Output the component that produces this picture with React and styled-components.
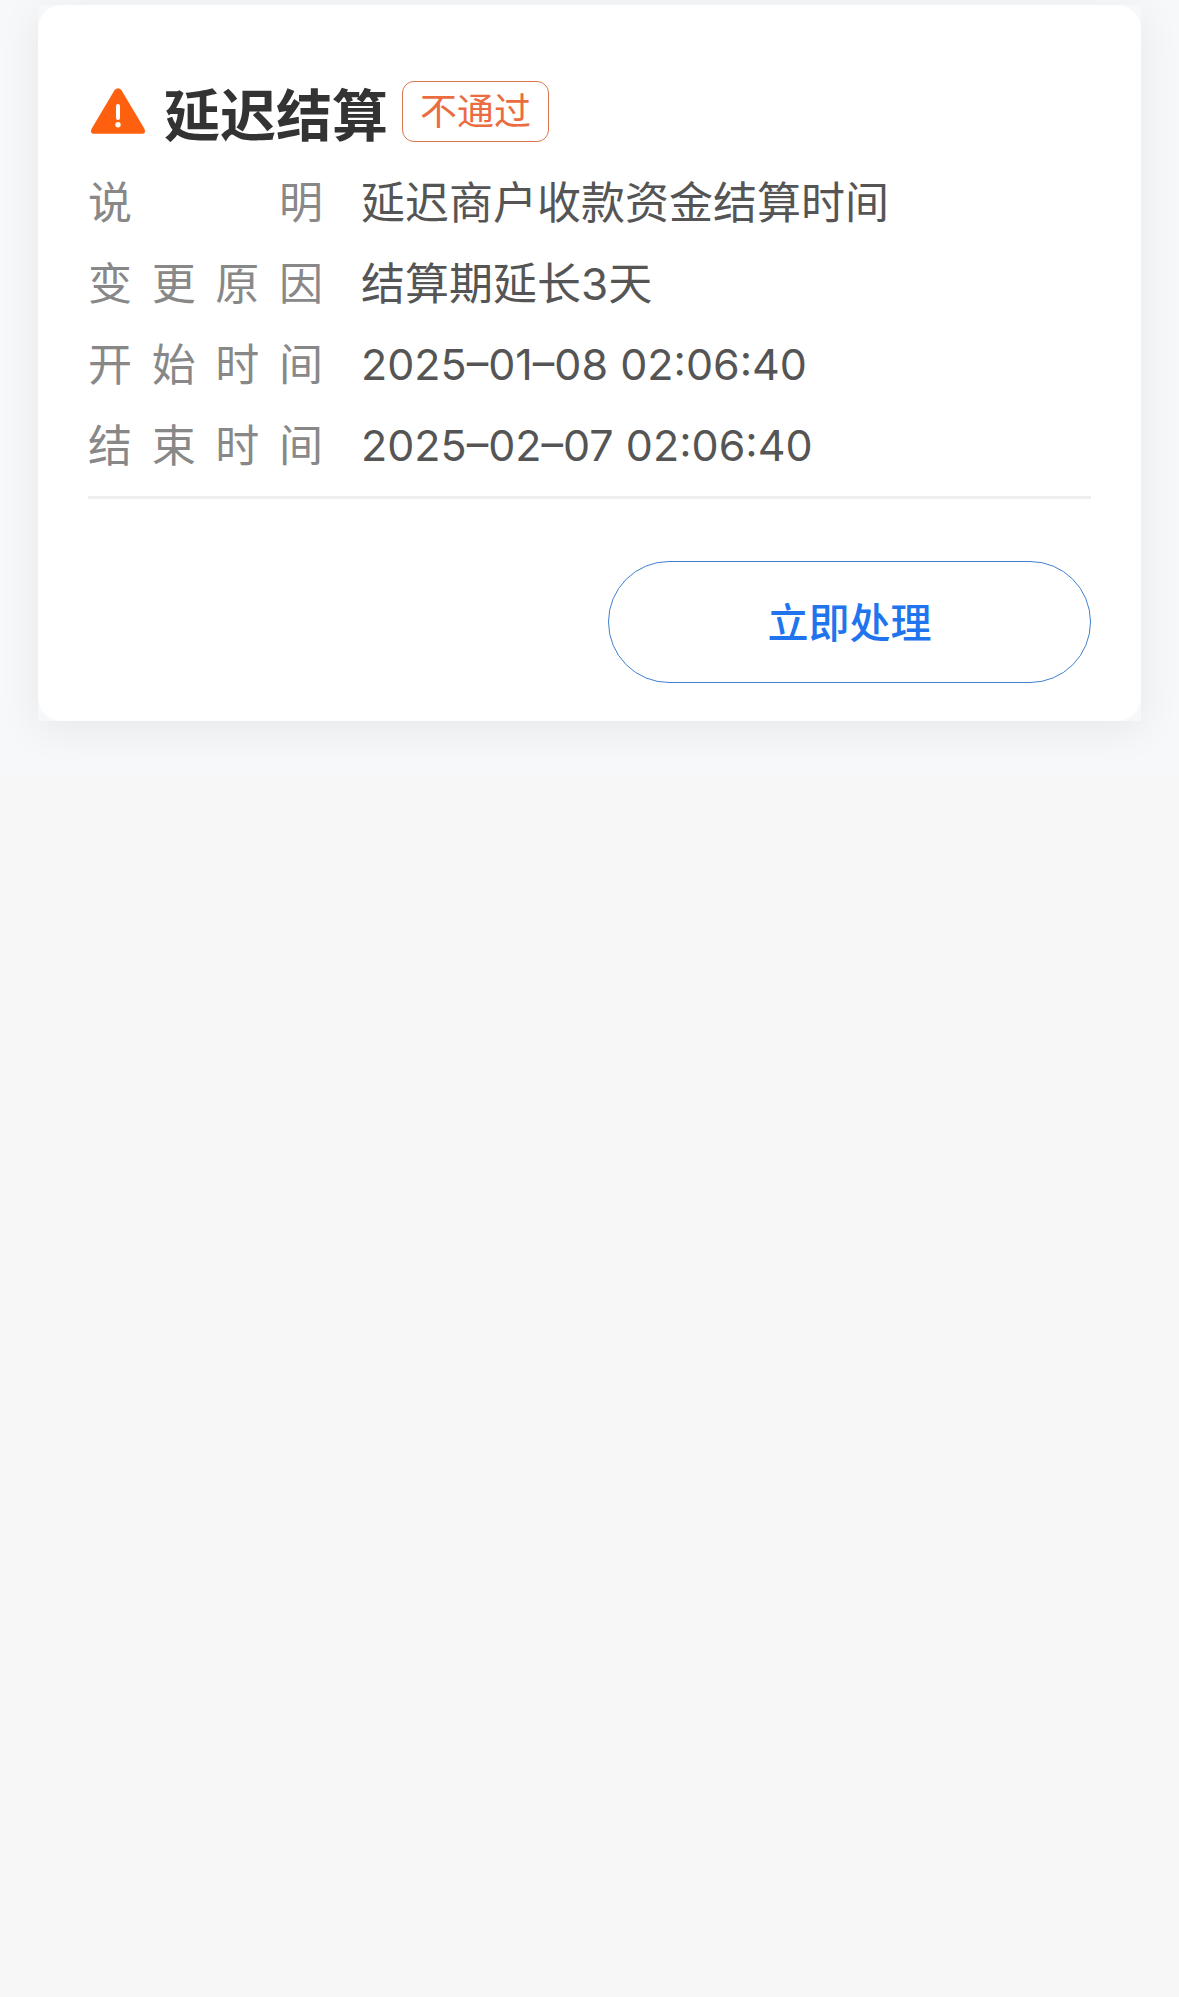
import styled, { createGlobalStyle } from "styled-components";

const GlobalStyle = createGlobalStyle`
  * {
    box-sizing: border-box;
  }
  body {
    margin: 0;
    background-color: #f7f7f7;
    font-family: Inter, "Noto Sans CJK SC", sans-serif;
  }
`;

const Section = styled.main`
  padding: 5px 38px 56px;
  background-color: #f6f8fa;
  overflow: hidden;
`;

const Shadow = styled.div`
  background-color: #f6f8fa;
  box-shadow: 0 8px 40px rgba(0, 0, 0, 0.07);
`;

const Card = styled.article`
  padding: 76px 50px 38px;
  border-radius: 24px;
  background-color: #fff;
`;

const Header = styled.header`
  display: flex;
  align-items: center;
  height: 61px;
  margin-bottom: 31px;
`;

const WarningIcon = styled.svg`
  width: 60px;
  height: 60px;
  flex-shrink: 0;
  margin-right: 16px;
`;

const Title = styled.h1`
  margin: 0 14px 0 0;
  padding-top: 8px;
  color: #333;
  font-size: 56px;
  font-weight: 700;
  line-height: 62px;
`;

const Tag = styled.span`
  padding: 0 17px;
  border: 1px solid #d9774f;
  border-radius: 12px;
  color: #ea6c40;
  font-size: 37px;
  line-height: 59px;
`;

const InfoList = styled.dl`
  display: flex;
  flex-direction: column;
  gap: 20px;
  margin: 0;
  padding-bottom: 19px;
  border-bottom: 3px solid #eee;
`;

const InfoRow = styled.div`
  display: flex;
  gap: 38px;
  font-size: 44px;
  line-height: 61px;
`;

const Label = styled.dt`
  width: 235px;
  flex-shrink: 0;
  color: #888;
  text-align: justify;
  text-align-last: justify;
`;

const Value = styled.dd`
  margin: 0;
  color: #555;
  font-size: ${(props) => (props.$isDate ? "43px" : "44px")};
  line-height: ${(props) => (props.$isDate ? "58px" : "61px")};
`;

const Actions = styled.div`
  display: flex;
  justify-content: flex-end;
  margin-top: 62px;
`;

const ActionButton = styled.button`
  width: 483px;
  height: 122px;
  padding: 0 0 4px;
  border: 1px solid #3f80cf;
  border-radius: 61px;
  background-color: #fff;
  color: #2074ee;
  font-family: inherit;
  font-size: 41px;
  font-weight: 500;
  cursor: pointer;
`;

const infos = [
  { label: "说明", value: "延迟商户收款资金结算时间" },
  { label: "变更原因", value: "结算期延长3天" },
  { label: "开始时间", value: "2025–01–08 02:06:40", isDate: true },
  { label: "结束时间", value: "2025–02–07 02:06:40", isDate: true },
];

const App = () => {
  return (
    <>
      <GlobalStyle />
      <Section lang="zh-CN">
        <Shadow>
          <Card>
            <Header>
              <WarningIcon viewBox="0 0 60 60" aria-hidden="true">
                <path
                  d="M26.6 8 Q30 4.4 33.4 8 L56.4 46.8 Q58.4 51.8 54 51.8 H6 Q1.6 51.8 3.6 46.8 Z"
                  fill="#ff6010"
                />
                <rect x="28" y="22" width="4" height="16" rx="2" fill="#fff" />
                <circle cx="30" cy="42.8" r="2.7" fill="#fff" />
              </WarningIcon>
              <Title>延迟结算</Title>
              <Tag>不通过</Tag>
            </Header>
            <InfoList>
              {infos.map((info) => (
                <InfoRow key={info.label}>
                  <Label>{info.label}</Label>
                  <Value $isDate={info.isDate}>{info.value}</Value>
                </InfoRow>
              ))}
            </InfoList>
            <Actions>
              <ActionButton type="button">立即处理</ActionButton>
            </Actions>
          </Card>
        </Shadow>
      </Section>
    </>
  );
};

export default App;
